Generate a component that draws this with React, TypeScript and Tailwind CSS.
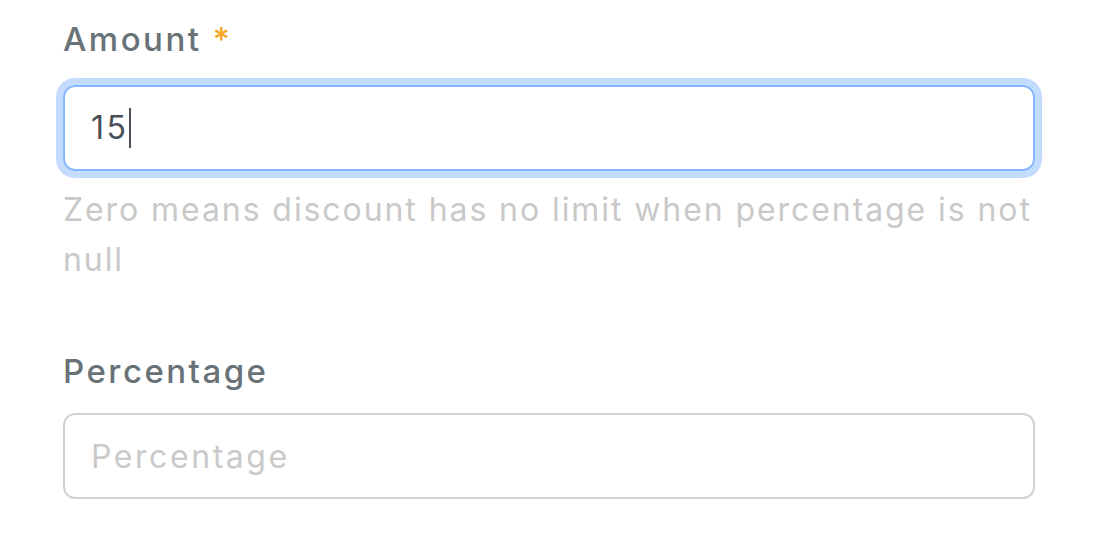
import { useState } from "react";

export default function App() {
  const [percentage, setPercentage] = useState("");

  return (
    <div className="min-h-[540px] bg-white pl-[63px] pt-[15px] font-['Inter',sans-serif]">
      {/* Amount */}
      <div className="w-[972px]">
        <label className="block text-[33px] leading-[48px] font-medium text-[#687277] tracking-[0.075em]">
          Amount <span className="text-[#f5a623]">*</span>
        </label>
        <div className="mt-[22px] flex h-[86px] items-center rounded-[12px] border-2 border-[#86b7fe] px-[26px] ring-[7px] ring-[#c3dbfe]">
          <span className="text-[32px] text-[#495057] tracking-[0.08em]">15</span>
          <span className="h-[40px] w-[2px] bg-[#495057]" />
        </div>
        <p className="mt-[14px] text-[32px] leading-[50px] text-[#c9c9c9] tracking-[0.06em]">
          Zero means discount has no limit when percentage is not null
        </p>
      </div>

      {/* Percentage */}
      <div className="mt-[62px] w-[972px]">
        <label className="block text-[33px] leading-[48px] font-medium text-[#687277] tracking-[0.075em]">
          Percentage
        </label>
        <input
          value={percentage}
          onChange={(e) => setPercentage(e.target.value)}
          placeholder="Percentage"
          className="mt-[18px] block h-[86px] w-full rounded-[12px] border-2 border-[#ced4da] px-[26px] text-[32px] text-[#495057] tracking-[0.08em] outline-none placeholder:text-[#cacaca]"
        />
      </div>
    </div>
  );
}
